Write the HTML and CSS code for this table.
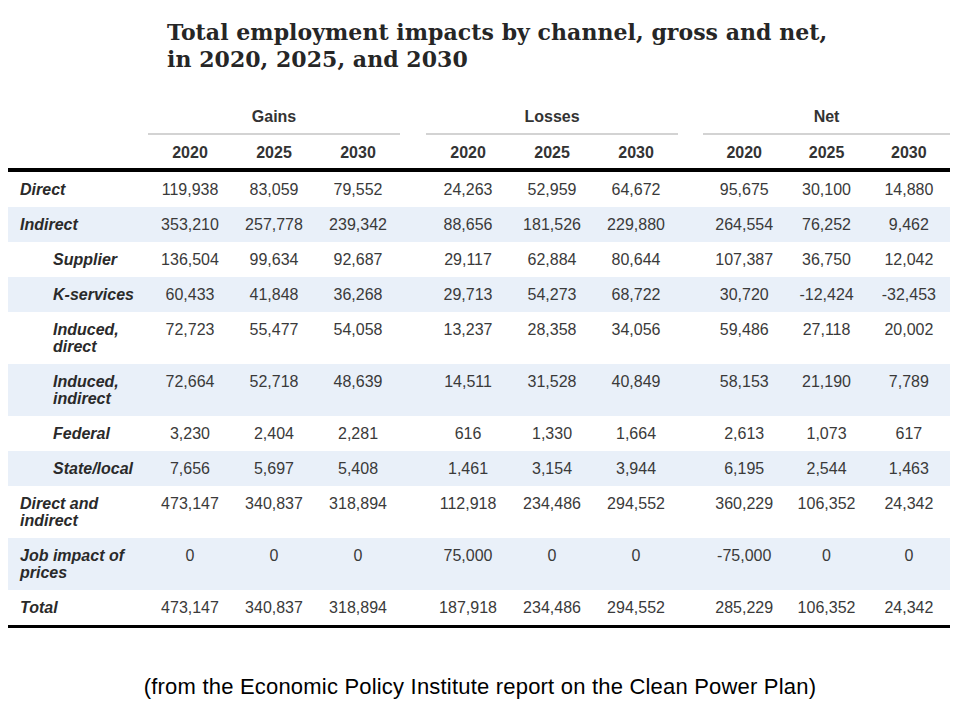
FILE: index.html
```html
<!DOCTYPE html>
<html lang="en">
<head>
<meta charset="utf-8">
<title>Total employment impacts</title>
<link rel="stylesheet" href="styles.css">
</head>
<body>
<div class="page">
  <h1 class="title">Total employment impacts by channel, gross and net,<br>in 2020, 2025, and 2030</h1>
  <table class="data">
    <colgroup>
      <col class="c-label">
      <col class="c-num"><col class="c-num"><col class="c-num">
      <col class="c-gap1">
      <col class="c-num"><col class="c-num"><col class="c-num">
      <col class="c-gap2">
      <col class="c-net"><col class="c-net"><col class="c-net">
    </colgroup>
    <thead>
      <tr class="group">
        <th></th>
        <th colspan="3" class="g">Gains</th>
        <th></th>
        <th colspan="3" class="g">Losses</th>
        <th></th>
        <th colspan="3" class="g">Net</th>
      </tr>
      <tr class="years">
        <th></th>
        <th>2020</th><th>2025</th><th>2030</th>
        <th></th>
        <th>2020</th><th>2025</th><th>2030</th>
        <th></th>
        <th>2020</th><th>2025</th><th>2030</th>
      </tr>
    </thead>
    <tbody>
      <tr>
        <td class="lbl">Direct</td>
        <td>119,938</td><td>83,059</td><td>79,552</td><td></td>
        <td>24,263</td><td>52,959</td><td>64,672</td><td></td>
        <td>95,675</td><td>30,100</td><td>14,880</td>
      </tr>
      <tr class="shade">
        <td class="lbl">Indirect</td>
        <td>353,210</td><td>257,778</td><td>239,342</td><td></td>
        <td>88,656</td><td>181,526</td><td>229,880</td><td></td>
        <td>264,554</td><td>76,252</td><td>9,462</td>
      </tr>
      <tr>
        <td class="lbl sub">Supplier</td>
        <td>136,504</td><td>99,634</td><td>92,687</td><td></td>
        <td>29,117</td><td>62,884</td><td>80,644</td><td></td>
        <td>107,387</td><td>36,750</td><td>12,042</td>
      </tr>
      <tr class="shade">
        <td class="lbl sub">K-services</td>
        <td>60,433</td><td>41,848</td><td>36,268</td><td></td>
        <td>29,713</td><td>54,273</td><td>68,722</td><td></td>
        <td>30,720</td><td>-12,424</td><td>-32,453</td>
      </tr>
      <tr>
        <td class="lbl sub">Induced, direct</td>
        <td>72,723</td><td>55,477</td><td>54,058</td><td></td>
        <td>13,237</td><td>28,358</td><td>34,056</td><td></td>
        <td>59,486</td><td>27,118</td><td>20,002</td>
      </tr>
      <tr class="shade">
        <td class="lbl sub">Induced, indirect</td>
        <td>72,664</td><td>52,718</td><td>48,639</td><td></td>
        <td>14,511</td><td>31,528</td><td>40,849</td><td></td>
        <td>58,153</td><td>21,190</td><td>7,789</td>
      </tr>
      <tr>
        <td class="lbl sub">Federal</td>
        <td>3,230</td><td>2,404</td><td>2,281</td><td></td>
        <td>616</td><td>1,330</td><td>1,664</td><td></td>
        <td>2,613</td><td>1,073</td><td>617</td>
      </tr>
      <tr class="shade">
        <td class="lbl sub">State/local</td>
        <td>7,656</td><td>5,697</td><td>5,408</td><td></td>
        <td>1,461</td><td>3,154</td><td>3,944</td><td></td>
        <td>6,195</td><td>2,544</td><td>1,463</td>
      </tr>
      <tr>
        <td class="lbl">Direct and indirect</td>
        <td>473,147</td><td>340,837</td><td>318,894</td><td></td>
        <td>112,918</td><td>234,486</td><td>294,552</td><td></td>
        <td>360,229</td><td>106,352</td><td>24,342</td>
      </tr>
      <tr class="shade">
        <td class="lbl">Job impact of prices</td>
        <td>0</td><td>0</td><td>0</td><td></td>
        <td>75,000</td><td>0</td><td>0</td><td></td>
        <td>-75,000</td><td>0</td><td>0</td>
      </tr>
      <tr class="last">
        <td class="lbl">Total</td>
        <td>473,147</td><td>340,837</td><td>318,894</td><td></td>
        <td>187,918</td><td>234,486</td><td>294,552</td><td></td>
        <td>285,229</td><td>106,352</td><td>24,342</td>
      </tr>
    </tbody>
  </table>
  <p class="caption">(from the Economic Policy Institute report on the Clean Power Plan)</p>
</div>
</body>
</html>
```

FILE: styles.css
```css
html, body {
  margin: 0;
  padding: 0;
  background: #ffffff;
}

.page {
  width: 960px;
  height: 720px;
  position: relative;
  overflow: hidden;
}

.title {
  margin: 0;
  padding: 19px 0 0 167px;
  font-family: "DejaVu Serif", "Liberation Serif", serif;
  font-weight: bold;
  font-size: 22px;
  line-height: 27px;
  color: #262626;
  letter-spacing: 0.05px;
}

.data {
  margin: 28px 0 0 8px;
  width: 942px;
  table-layout: fixed;
  border-collapse: collapse;
  font-family: "Liberation Sans", Arial, sans-serif;
  font-size: 16px;
  color: #3a3a3a;
}

.c-label { width: 140px; }
.c-num { width: 84px; }
.c-gap1 { width: 26px; }
.c-gap2 { width: 25px; }
.c-net { width: 82.33px; }

.data th,
.data td {
  padding: 0;
  text-align: center;
  vertical-align: top;
  line-height: 17px;
}

.group th {
  font-weight: bold;
  color: #333333;
  padding: 7px 0 7px;
  line-height: 18px;
}

.group th.g {
  border-bottom: 2px solid #d3d3d3;
}

.years th {
  font-weight: bold;
  color: #333333;
  padding: 9px 0 6px;
  line-height: 18px;
  border-bottom: 4px solid #000000;
}

.data tbody td {
  padding: 9px 0;
}

.data tbody tr.shade td {
  background: #e9f0f9;
}

.data td.lbl {
  text-align: left;
  padding-left: 12px;
  padding-right: 6px;
  font-weight: bold;
  font-style: italic;
  color: #2a2a2a;
}

.data td.lbl.sub {
  padding-left: 45px;
}

.data tr.last td {
  border-bottom: 3px solid #000000;
}

.caption {
  margin: 46px 0 0;
  text-align: center;
  font-family: "Liberation Sans", Arial, sans-serif;
  font-size: 22px;
  line-height: 25px;
  color: #000000;
  letter-spacing: 0.2px;
}
```
